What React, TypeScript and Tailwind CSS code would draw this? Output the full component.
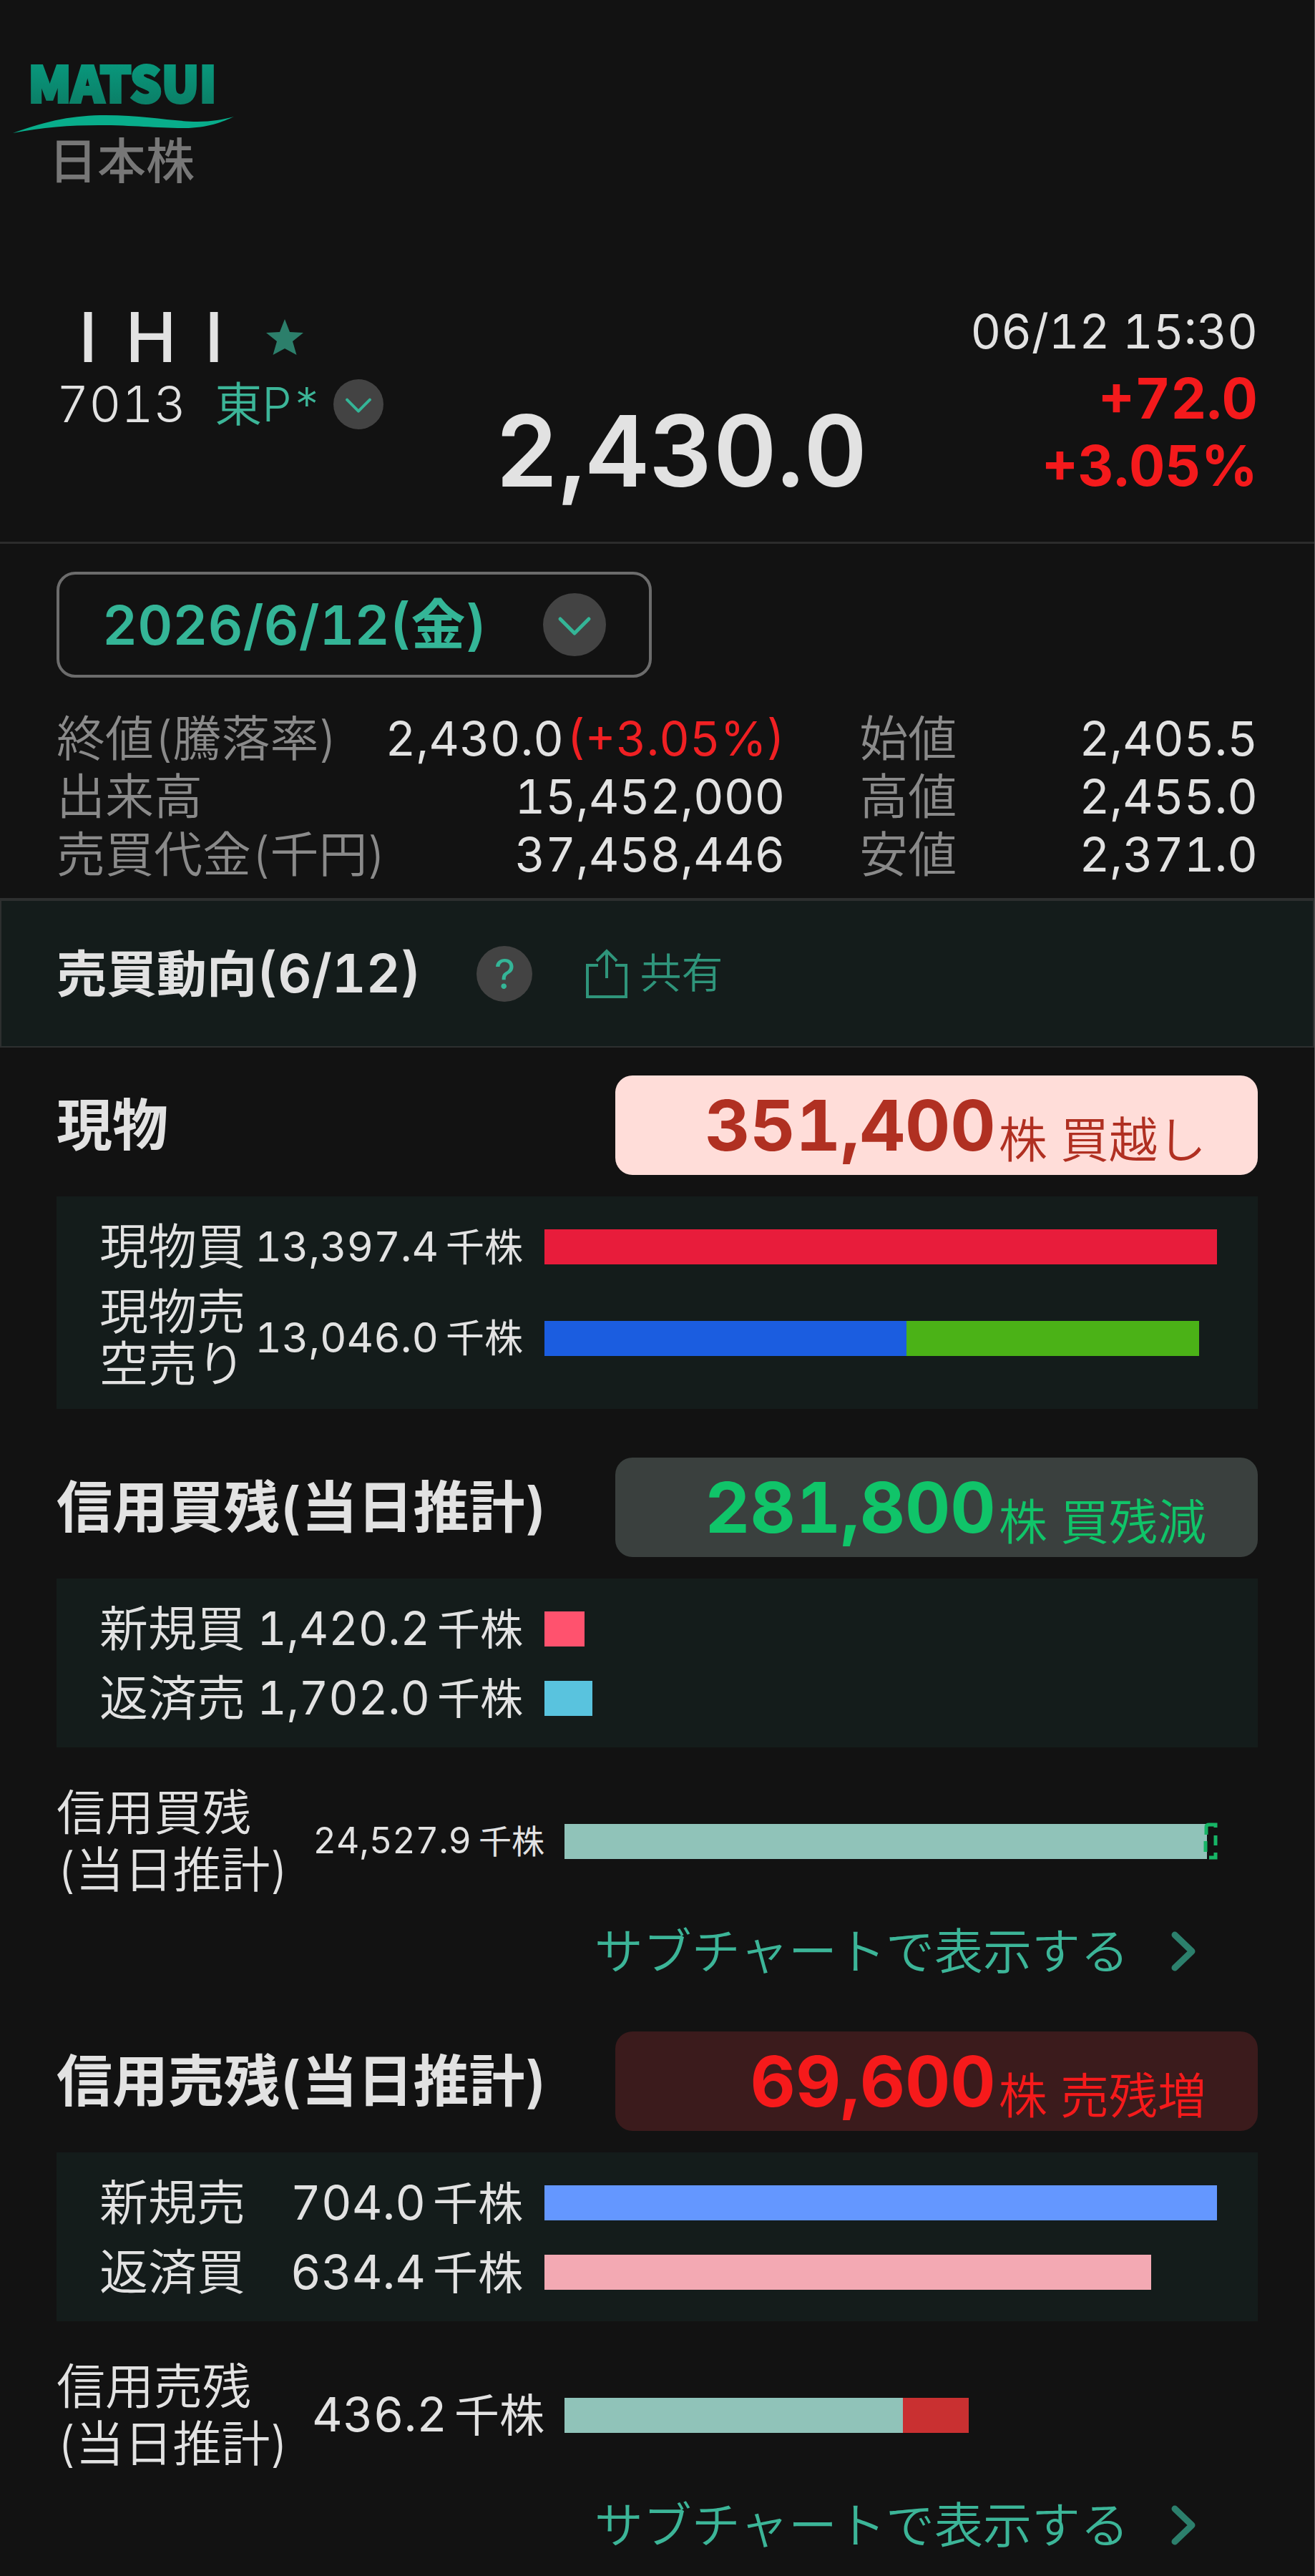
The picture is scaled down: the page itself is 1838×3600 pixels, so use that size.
import React from 'react'

type Segment = { pct: number; color: string }

type BarRow = {
  label: string[]
  value: string
  size: 'sm' | 'md' | 'lg'
  segments: Segment[]
}

const SIZES = {
  xs: { value: 'text-[50px]', unit: 'text-[46px]' },
  sm: { value: 'text-[58px]', unit: 'text-[54px]' },
  md: { value: 'text-[64px]', unit: 'text-[60px]' },
  lg: { value: 'text-[66px]', unit: 'text-[63px]' },
}

const quotesLeft = [
  { label: '終値(騰落率)', value: '2,430.0', rate: '(+3.05%)' },
  { label: '出来高', value: '15,452,000' },
  { label: '売買代金(千円)', value: '37,458,446' },
]

const quotesRight = [
  { label: '始値', value: '2,405.5' },
  { label: '高値', value: '2,455.0' },
  { label: '安値', value: '2,371.0' },
]

const spotRows: BarRow[] = [
  { label: ['現物買'], value: '13,397.4', size: 'sm', segments: [{ pct: 100, color: '#e81c3b' }] },
  {
    label: ['現物売', '空売り'],
    value: '13,046.0',
    size: 'sm',
    segments: [
      { pct: 53.8, color: '#1b5de0' },
      { pct: 43.5, color: '#4bb217' },
    ],
  },
]

const marginBuyRows: BarRow[] = [
  { label: ['新規買'], value: '1,420.2', size: 'md', segments: [{ pct: 6, color: '#ff526e' }] },
  { label: ['返済売'], value: '1,702.0', size: 'md', segments: [{ pct: 7.1, color: '#59c3de' }] },
]

const marginSellRows: BarRow[] = [
  { label: ['新規売'], value: '704.0', size: 'lg', segments: [{ pct: 100, color: '#6497ff' }] },
  { label: ['返済買'], value: '634.4', size: 'lg', segments: [{ pct: 90.2, color: '#f3a9b3' }] },
]

const Logo = () => (
  <div className="pt-20 pl-[18px]">
    <svg width="310" height="111" viewBox="0 0 310 111" className="overflow-visible" role="img" aria-label="MATSUI">
      <defs>
        <linearGradient id="logo-fill" x1="0" y1="0" x2="0" y2="1">
          <stop offset="0.2" stopColor="#089a7e" />
          <stop offset="0.8" stopColor="#0b8068" />
        </linearGradient>
      </defs>
      <text
        x="153"
        y="63"
        textAnchor="middle"
        fill="url(#logo-fill)"
        stroke="url(#logo-fill)"
        strokeWidth="4"
        className="font-['Noto_Sans_CJK_JP',sans-serif] text-[69px] font-black"
      >
        MATSUI
      </text>
      <path
        d="M0 106 C50 88 85 81 130 81 C185 81 225 90 258 90 C278 90 294 87 309 83 C294 90 272 99 240 99 C200 99 170 95 120 95 C80 95 40 98 0 106 Z"
        fill="#08ad8b"
      />
    </svg>
    <p className="pl-[50px] text-[68px] leading-[68px] font-medium text-[#777777]">日本株</p>
  </div>
)

const ChevronCircle = ({ className }: { className: string }) => (
  <span className={`flex items-center justify-center rounded-full bg-[#434343] ${className}`}>
    <svg viewBox="0 0 88 88" className="size-full" fill="none" stroke="#34b597" strokeWidth="5" strokeLinecap="round" strokeLinejoin="round">
      <path d="M24 36 L44 56 L64 36" />
    </svg>
  </span>
)

const StockHeader = () => (
  <header className="flex border-b-3 border-[#2c2c2c] px-[79px] pt-[157px] pb-[59px]">
    <div className="pt-2">
      <div className="flex items-center gap-[29px]">
        <h1 className="flex text-[96px] leading-[94px] font-medium">
          <span className="w-[88px] text-center">I</span>
          <span className="w-[88px] text-center">H</span>
          <span className="w-[88px] text-center">I</span>
        </h1>
        <button type="button" aria-label="お気に入り">
          <svg width="52" height="50" viewBox="0 0 52 50" fill="#2c7f6b">
            <path d="M26 0 L33 18 L52 19 L37 31 L42.500 50 L26 41 L9.500 50 L15 31 L0 19 L19 18 Z" />
          </svg>
        </button>
      </div>
      <div className="flex items-center text-[70px] leading-[94px] font-light">
        <span>7013</span>
        <button type="button" className="ml-10 flex items-center gap-4 text-[66px] font-[350] text-[#3cb598]">
          東P*
          <ChevronCircle className="size-[70px]" />
        </button>
      </div>
    </div>
    <p className="ml-auto self-end text-[138px] leading-[136px] font-semibold">2,430.0</p>
    <div className="ml-[144px] text-right leading-[94px]">
      <p className="text-[66px]">06/12 15:30</p>
      <p className="text-[78px] font-bold text-[#f41a1c]">+72.0</p>
      <p className="text-[78px] font-bold text-[#f41a1c]">+3.05%</p>
    </div>
  </header>
)

const QuoteList = ({ items }: { items: { label: string; value: string; rate?: string }[] }) => (
  <dl className="text-[68px] leading-[81px]">
    {items.map((q) => (
      <div key={q.label} className="flex justify-between">
        <dt className="font-[350] text-[#8a8a8a]">{q.label}</dt>
        <dd className="text-[66px]">
          {q.value}
          {q.rate && <span className="pl-1 text-[#f02023]">{q.rate}</span>}
        </dd>
      </div>
    ))}
  </dl>
)

const Quotes = () => (
  <section className="px-[79px] pt-[39px] pb-5">
    <div className="relative w-fit">
      <select
        aria-label="日付"
        className="h-[148px] w-[832px] appearance-none rounded-[26px] border-4 border-[#6c6c6c] bg-transparent pl-[60px] text-[76px] font-semibold text-[#34b597]"
      >
        <option>2026/6/12(金)</option>
      </select>
      <span className="pointer-events-none absolute inset-y-0 right-16 flex items-center">
        <ChevronCircle className="size-[88px]" />
      </span>
    </div>
    <div className="mt-[45px] grid grid-cols-[1019fr_557fr] gap-[104px]">
      <QuoteList items={quotesLeft} />
      <QuoteList items={quotesRight} />
    </div>
  </section>
)

const TrendBar = () => (
  <div className="flex h-[209px] items-center border-2 border-t-4 border-[#2d2f2f] bg-[#141c1b] px-[77px]">
    <h2 className="text-[70px] font-semibold">
      売買動向<span className="text-[74px]">(6/12)</span>
    </h2>
    <button type="button" aria-label="ヘルプ" className="ml-[78px] size-[78px] rounded-full bg-[#434343] text-[58px] leading-[78px] text-[#34b597]">
      ?
    </button>
    <button type="button" className="ml-[74px] flex items-center gap-4 text-[58px] font-[350] text-[#2f957b]">
      <svg width="60" height="70" viewBox="0 0 60 70" fill="none" stroke="currentColor" strokeWidth="4">
        <path d="M18 23 H3 V67 H57 V23 H42" />
        <path d="M30 41 V3 M16 17 L30 3 L44 17" />
      </svg>
      共有
    </button>
  </div>
)

const SectionHead = ({ title, amount, note, tone }: { title: string; amount: string; note: string; tone: string }) => (
  <div className="flex items-center justify-between">
    <h3 className="text-[78px] leading-[100px] font-semibold">{title}</h3>
    <p className={`flex h-[139px] w-[898px] items-center justify-end rounded-[24px] pr-[72px] ${tone}`}>
      <span className="text-[98px] leading-[139px] font-bold">{amount}</span>
      <span className="pt-10 pl-1 text-[68px] leading-[80px] font-[350]">株 {note}</span>
    </p>
  </div>
)

const Amount = ({ value, size }: { value: string; size: keyof typeof SIZES }) => (
  <span className={`leading-[73px] whitespace-nowrap ${SIZES[size].value}`}>
    {value}
    <span className={`pl-2.5 ${SIZES[size].unit}`}>千株</span>
  </span>
)

const Bar = ({ segments, children }: { segments: Segment[]; children?: React.ReactNode }) => (
  <div className="flex h-[49px] flex-1">
    {segments.map((s) => (
      <div key={s.color} style={{ width: `${s.pct}%`, backgroundColor: s.color }} />
    ))}
    {children}
  </div>
)

const BarPanel = ({ rows }: { rows: BarRow[] }) => (
  <div className="mt-[30px] bg-[#141c1b] pt-[22px] pr-[57px] pb-5 pl-[60px]">
    {rows.map((row) => (
      <div key={row.label[0]} className="flex min-h-[97px] items-center gap-[30px]">
        <div className="flex w-[592px] shrink-0 items-center justify-between">
          <div className="py-1.5 text-[68px] leading-[73px] font-[350]">
            {row.label.map((line) => (
              <div key={line}>{line}</div>
            ))}
          </div>
          <Amount value={row.value} size={row.size} />
        </div>
        <Bar segments={row.segments} />
      </div>
    ))}
  </div>
)

const Balance = ({ name, value, size, segments, decreased }: {
  name: string
  value: string
  size: keyof typeof SIZES
  segments: Segment[]
  decreased?: boolean
}) => (
  <>
    <div className="mt-[51px] flex items-center gap-7 pr-[57px]">
      <div className="flex w-[682px] shrink-0 items-center justify-between">
        <div className="text-[68px] leading-[80px] font-[350]">
          {name}
          <br />
          (当日推計)
        </div>
        <Amount value={value} size={size} />
      </div>
      <Bar segments={segments}>
        {decreased && (
          <svg width="14" height="49" viewBox="0 0 14 49" className="shrink-0 overflow-visible" fill="none" stroke="#17b566" strokeWidth="5">
            <path d="M-1 15 V4 Q-1 1 3 1 H12 V5 M12 16 V30 M-2 24 V39 M12 40 V47 H3" />
          </svg>
        )}
      </Bar>
    </div>
    <div className="mt-[30px] flex justify-end pr-[86px]">
      <a href="#" className="flex items-center gap-[58px] text-[68px] leading-[88px] font-[350] text-[#3cb598]">
        サブチャートで表示する
        <svg width="36" height="56" viewBox="0 0 36 56" fill="none" stroke="#2c7f6c" strokeWidth="9" strokeLinecap="round" strokeLinejoin="round">
          <path d="M6 5 L30 28 L6 51" />
        </svg>
      </a>
    </div>
  </>
)

function App() {
  return (
    <div className="min-h-screen border-r border-[#555555] bg-[#121212] font-[Inter,'Noto_Sans_CJK_JP',sans-serif] text-[#e2e2e2] tabular-nums">
      <Logo />
      <StockHeader />
      <Quotes />
      <TrendBar />
      <main className="flex flex-col gap-[68px] px-[79px] pt-[39px] pb-6">
        <section>
          <SectionHead title="現物" amount="351,400" note="買越し" tone="bg-[#ffddd9] text-[#b03022]" />
          <BarPanel rows={spotRows} />
        </section>
        <section>
          <SectionHead title="信用買残(当日推計)" amount="281,800" note="買残減" tone="bg-[#3a403e] text-[#10c469]" />
          <BarPanel rows={marginBuyRows} />
          <Balance name="信用買残" value="24,527.9" size="xs" segments={[{ pct: 98.5, color: '#90c3b9' }]} decreased />
        </section>
        <section>
          <SectionHead title="信用売残(当日推計)" amount="69,600" note="売残増" tone="bg-[#3b1b1c] text-[#f61a1b]" />
          <BarPanel rows={marginSellRows} />
          <Balance
            name="信用売残"
            value="436.2"
            size="lg"
            segments={[
              { pct: 51.9, color: '#90c3b9' },
              { pct: 10, color: '#c93031' },
            ]}
          />
        </section>
      </main>
    </div>
  )
}

export default App
